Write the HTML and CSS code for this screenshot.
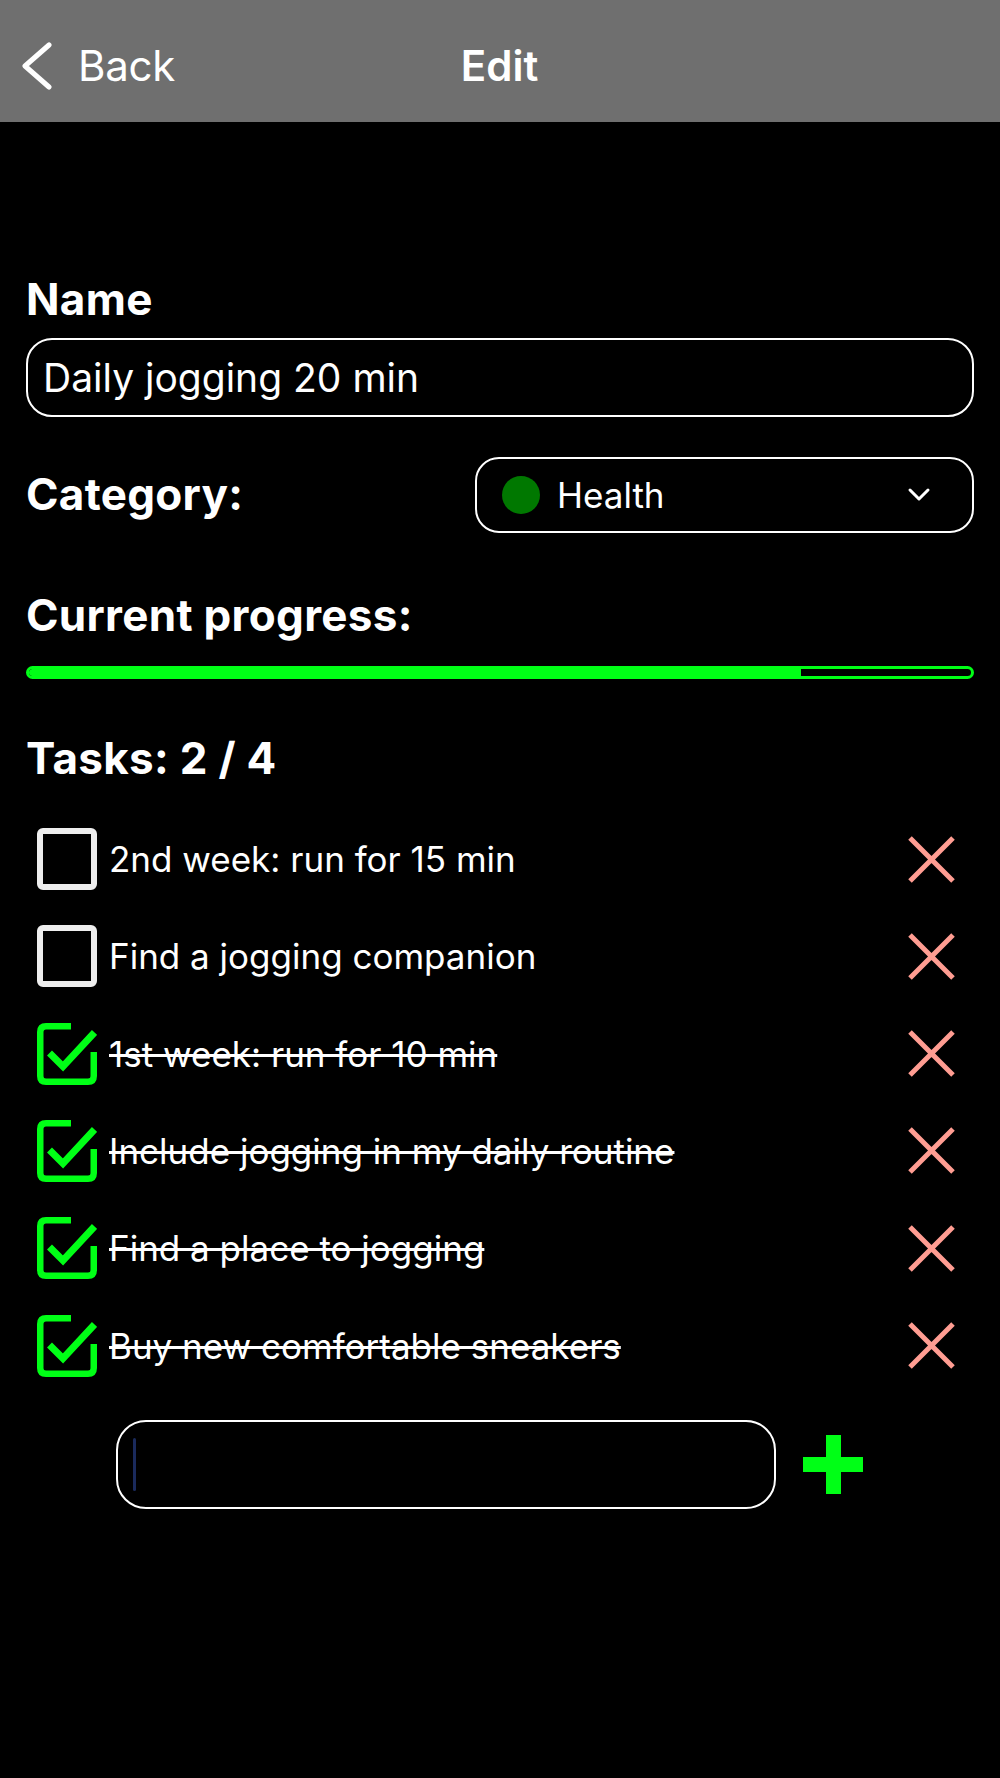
FILE: index.html
```html
<!DOCTYPE html>
<html lang="en">
<head>
    <meta charset="UTF-8">
    <meta name="viewport" content="width=device-width, initial-scale=1.0">
    <title>Edit</title>
    <link rel="stylesheet" href="styles.css">
</head>
<body>
    <header class="nav">
        <a class="nav-back" href="javascript:void(0)">
            <svg class="nav-chevron" width="32" height="48" viewBox="0 0 32 48">
                <path d="M28 3 L4 24 L28 45" fill="none" stroke="#fff" stroke-width="5" stroke-linecap="round" stroke-linejoin="round"/>
            </svg>
            <span>Back</span>
        </a>
        <h1 class="nav-title">Edit</h1>
        <span></span>
    </header>

    <main class="form">
        <label class="label label-name" for="name">Name</label>
        <input class="name-input" id="name" type="text" value="Daily jogging 20 min">

        <div class="category-row">
            <span class="label">Category:</span>
            <div class="select">
                <span class="select-dot"></span>
                <span class="select-text">Health</span>
                <svg class="select-arrow" width="24" height="15" viewBox="0 0 24 15">
                    <path d="M3 3 L12 12 L21 3" fill="none" stroke="#fff" stroke-width="3" stroke-linecap="round" stroke-linejoin="round"/>
                </svg>
            </div>
        </div>

        <h2 class="label label-progress">Current progress:</h2>
        <div class="progress">
            <div class="progress-fill" style="width: 82%"></div>
        </div>

        <h2 class="label label-tasks">Tasks: 2 / 4</h2>
        <ul class="tasks">
            <li class="task">
                <span class="box"></span>
                <span class="task-text">2nd week: run for 15 min</span>
                <svg class="remove" width="47" height="47" viewBox="0 0 47 47"><path d="M2 2 L45 45 M45 2 L2 45" stroke="#ff9d92" stroke-width="5"/></svg>
            </li>
            <li class="task">
                <span class="box"></span>
                <span class="task-text">Find a jogging companion</span>
                <svg class="remove" width="47" height="47" viewBox="0 0 47 47"><path d="M2 2 L45 45 M45 2 L2 45" stroke="#ff9d92" stroke-width="5"/></svg>
            </li>
            <li class="task done">
                <svg class="box-checked" width="60" height="62" viewBox="0 0 60 62"><path d="M34 3.25 H9 Q3.25 3.25 3.25 9 V53 Q3.25 58.75 9 58.75 H51 Q56.75 58.75 56.75 53 V29" fill="none" stroke="#00ff16" stroke-width="6.5"/><path d="M12.5 30 L26 43.5 L57.5 9.5" fill="none" stroke="#00ff16" stroke-width="7"/></svg>
                <span class="task-text">1st week: run for 10 min</span>
                <svg class="remove" width="47" height="47" viewBox="0 0 47 47"><path d="M2 2 L45 45 M45 2 L2 45" stroke="#ff9d92" stroke-width="5"/></svg>
            </li>
            <li class="task done">
                <svg class="box-checked" width="60" height="62" viewBox="0 0 60 62"><path d="M34 3.25 H9 Q3.25 3.25 3.25 9 V53 Q3.25 58.75 9 58.75 H51 Q56.75 58.75 56.75 53 V29" fill="none" stroke="#00ff16" stroke-width="6.5"/><path d="M12.5 30 L26 43.5 L57.5 9.5" fill="none" stroke="#00ff16" stroke-width="7"/></svg>
                <span class="task-text">Include jogging in my daily routine</span>
                <svg class="remove" width="47" height="47" viewBox="0 0 47 47"><path d="M2 2 L45 45 M45 2 L2 45" stroke="#ff9d92" stroke-width="5"/></svg>
            </li>
            <li class="task done">
                <svg class="box-checked" width="60" height="62" viewBox="0 0 60 62"><path d="M34 3.25 H9 Q3.25 3.25 3.25 9 V53 Q3.25 58.75 9 58.75 H51 Q56.75 58.75 56.75 53 V29" fill="none" stroke="#00ff16" stroke-width="6.5"/><path d="M12.5 30 L26 43.5 L57.5 9.5" fill="none" stroke="#00ff16" stroke-width="7"/></svg>
                <span class="task-text">Find a place to jogging</span>
                <svg class="remove" width="47" height="47" viewBox="0 0 47 47"><path d="M2 2 L45 45 M45 2 L2 45" stroke="#ff9d92" stroke-width="5"/></svg>
            </li>
            <li class="task done">
                <svg class="box-checked" width="60" height="62" viewBox="0 0 60 62"><path d="M34 3.25 H9 Q3.25 3.25 3.25 9 V53 Q3.25 58.75 9 58.75 H51 Q56.75 58.75 56.75 53 V29" fill="none" stroke="#00ff16" stroke-width="6.5"/><path d="M12.5 30 L26 43.5 L57.5 9.5" fill="none" stroke="#00ff16" stroke-width="7"/></svg>
                <span class="task-text">Buy new comfortable sneakers</span>
                <svg class="remove" width="47" height="47" viewBox="0 0 47 47"><path d="M2 2 L45 45 M45 2 L2 45" stroke="#ff9d92" stroke-width="5"/></svg>
            </li>
        </ul>

        <div class="add-row">
            <div class="add-input"><span class="caret"></span></div>
            <svg class="add-btn" width="60" height="60" viewBox="0 0 60 60">
                <rect x="23" y="0" width="15" height="59" fill="#00ff16"/>
                <rect x="0" y="22" width="60" height="15" fill="#00ff16"/>
            </svg>
        </div>
    </main>
</body>
</html>
```

FILE: styles.css
```css
* {
    margin: 0;
    padding: 0;
    box-sizing: border-box;
}
ul,li {
    list-style: none;
}
body {
    background: #000;
    color: #fff;
    font-family: Inter, "Noto Sans", sans-serif;
}
a {
    text-decoration: none;
    color: #fff;
}

/* top bar */
.nav {
    height: 122px;
    padding: 11px 22px 0 21px;
    background: #6f6f6f;
    display: grid;
    grid-template-columns: 1fr auto 1fr;
    align-items: center;
}
.nav-back {
    display: flex;
    align-items: center;
    gap: 25px;
    font-size: 42px;
    letter-spacing: -0.3px;
    line-height: 1.2;
}
.nav-chevron {
    display: block;
}
.nav-title {
    font-size: 42px;
    font-weight: 600;
    line-height: 1.2;
}

/* form */
.form {
    padding: 0 26px;
}
.label {
    display: block;
    font-size: 44px;
    font-weight: 700;
    letter-spacing: 0.3px;
    line-height: 1.2;
}
.label-name {
    margin-top: 151px;
}
.name-input {
    display: block;
    width: 100%;
    height: 79px;
    margin-top: 12px;
    padding: 0 15px;
    border: 2px solid #fff;
    border-radius: 26px;
    background: transparent;
    color: #fff;
    font-family: inherit;
    font-size: 39px;
    line-height: 1.2;
    outline: none;
}
.category-row {
    margin-top: 40px;
    display: flex;
    align-items: center;
    justify-content: space-between;
}
.select {
    width: 499px;
    height: 76px;
    padding: 0 41px 0 25px;
    border: 2px solid #fff;
    border-radius: 24px;
    display: flex;
    align-items: center;
}
.select-dot {
    width: 38px;
    height: 38px;
    border-radius: 50%;
    background: #007800;
}
.select-text {
    flex: 1;
    margin-left: 17px;
    font-size: 35px;
    line-height: 1.2;
}
.select-arrow {
    display: block;
}
.label-progress {
    margin-top: 56px;
}
.progress {
    height: 13px;
    margin-top: 24px;
    border: 3px solid #00ff16;
    border-radius: 7px;
    overflow: hidden;
}
.progress-fill {
    height: 100%;
    background: #00ff16;
}
.label-tasks {
    margin-top: 53px;
}

/* tasks */
.tasks {
    margin-top: 26px;
}
.task {
    height: 97.3px;
    padding: 0 19px 0 11px;
    display: flex;
    align-items: center;
}
.box {
    width: 60px;
    height: 62px;
    border: 6px solid #eee;
    border-radius: 6px;
    flex: none;
}
.box-checked {
    display: block;
    flex: none;
}
.task-text {
    flex: 1;
    margin-left: 12px;
    font-size: 35px;
    line-height: 1.2;
}
.done .task-text {
    text-decoration: line-through;
}
.remove {
    display: block;
    flex: none;
}

/* new task */
.add-row {
    margin-top: 26px;
    padding-left: 90px;
    display: flex;
    align-items: center;
    gap: 27px;
}
.add-input {
    width: 660px;
    height: 89px;
    padding: 0 15px;
    border: 2px solid #fff;
    border-radius: 30px;
    display: flex;
    align-items: center;
}
.caret {
    width: 3px;
    height: 53px;
    border-radius: 2px;
    background: #1a2a5c;
}
.add-btn {
    display: block;
}
```
